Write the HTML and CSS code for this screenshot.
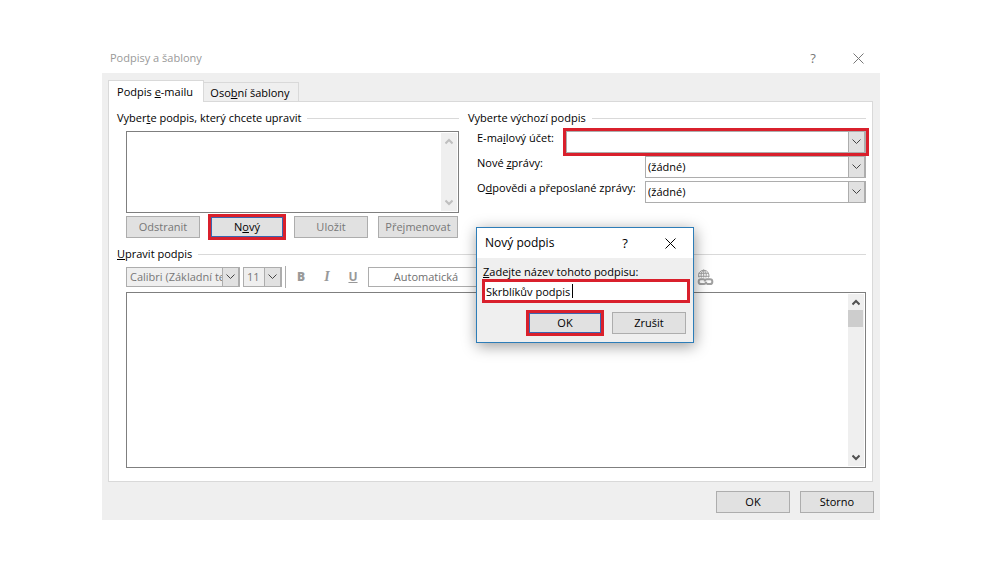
FILE: index.html
```html
<!DOCTYPE html>
<html lang="cs">
<head>
<meta charset="utf-8">
<title>Podpisy a šablony</title>
<link rel="stylesheet" href="styles.css">
</head>
<body>
<main class="window">
  <header class="titlebar">
    <h1 class="title">Podpisy a šablony</h1>
    <button class="caption-button" type="button" aria-label="Nápověda">?</button>
    <button class="caption-button caption-close" type="button" aria-label="Zavřít"><svg width="11" height="11" viewBox="0 0 11 11"><path d="M.5.5l10 10M10.500.5l-10 10"/></svg></button>
  </header>
  <div class="window-body">
    <div class="tabs" role="tablist">
      <button class="tab tab-active" type="button" role="tab" aria-selected="true">Podpis <u>e</u>-mailu</button>
      <button class="tab" type="button" role="tab" aria-selected="false">Oso<u>b</u>ní šablony</button>
    </div>
    <section class="panel" role="tabpanel">
      <div class="columns">
        <section class="group">
          <h2 class="legend">Vyber<u>t</u>e podpis, který chcete upravit</h2>
          <div class="indent">
            <div class="box list" role="listbox" aria-label="Podpisy">
              <div class="scrollbar scrollbar-disabled">
                <svg width="8" height="7" viewBox="0 0 8 7"><path d="M.5 5.500l3.500-3.500 3.500 3.500"/></svg>
                <svg width="8" height="7" viewBox="0 0 8 7"><path d="M.5 1.500l3.500 3.500 3.500-3.500"/></svg>
              </div>
            </div>
            <div class="list-actions">
              <button class="button" type="button" disabled>Odstranit</button>
              <button class="button marked default" type="button">N<u>o</u>vý</button>
              <button class="button" type="button" disabled>Uložit</button>
              <button class="button button-wide" type="button" disabled>Přejmenovat</button>
            </div>
          </div>
        </section>
        <section class="group group-defaults">
          <h2 class="legend">Vyberte výchozí podpis</h2>
          <div class="fields">
            <div class="field">
              <label for="account">E-ma<u>i</u>lový účet:</label>
              <span class="combo combo-long marked"><select id="account"><option></option></select><svg class="arrow" viewBox="0 0 9 6"><path d="M.5.5l4 4 4-4"/></svg></span>
            </div>
            <div class="field">
              <label for="new">Nové <u>z</u>právy:</label>
              <span class="combo"><select id="new"><option>(žádné)</option></select><svg class="arrow" viewBox="0 0 9 6"><path d="M.5.5l4 4 4-4"/></svg></span>
            </div>
            <div class="field">
              <label for="reply">O<u>d</u>povědi a přeposlané zprávy:</label>
              <span class="combo"><select id="reply"><option>(žádné)</option></select><svg class="arrow" viewBox="0 0 9 6"><path d="M.5.5l4 4 4-4"/></svg></span>
            </div>
          </div>
        </section>
      </div>
      <section class="group edit">
        <h2 class="legend"><u>U</u>pravit podpis</h2>
        <div class="indent">
          <div class="toolbar">
            <span class="combo combo-small combo-font"><select aria-label="Písmo" disabled><option>Calibri (Základní text)</option></select><svg class="arrow" viewBox="0 0 9 6"><path d="M.5.5l4 4 4-4"/></svg></span>
            <span class="combo combo-small combo-size"><select aria-label="Velikost" disabled><option>11</option></select><svg class="arrow" viewBox="0 0 9 6"><path d="M.5.5l4 4 4-4"/></svg></span>
            <span class="separator"></span>
            <button class="format" type="button" disabled><b>B</b></button>
            <button class="format format-italic" type="button" disabled><i>I</i></button>
            <button class="format" type="button" disabled><u>U</u></button>
            <button class="color" type="button" disabled>Automatická</button>
            <button class="link" type="button" aria-label="Hypertextový odkaz" disabled>
              <svg width="17" height="17" viewBox="0 0 17 17">
                <path d="M2 8.500A5.200 5.200 0 1 1 11.500 8.500M1.500 4.300h10.500M1 7.300h11.500M6.700 1v7.500M4.500 8.500C3.600 5.500 4.200 2.500 6.700 1c2.500 1.500 3.100 4.500 2.200 7.500"/>
                <path class="chain" d="M7.500 10.300H4a2.300 2.300 0 0 0 0 4.700h3a2.300 2.300 0 0 0 2.300-2.300M9.500 15h3.500a2.300 2.300 0 0 0 0-4.700h-3a2.300 2.300 0 0 0-2.300 2.300"/>
              </svg>
            </button>
          </div>
          <div class="box editor">
            <textarea class="editor-text" aria-label="Text podpisu"></textarea>
            <div class="scrollbar">
              <svg width="8" height="7" viewBox="0 0 8 7"><path d="M.5 5.500l3.500-3.500 3.500 3.500"/></svg>
              <span class="thumb"></span>
              <svg width="8" height="7" viewBox="0 0 8 7"><path d="M.5 1.500l3.500 3.500 3.500-3.500"/></svg>
            </div>
          </div>
        </div>
      </section>
    </section>
    <footer class="footer">
      <button class="button" type="button">OK</button>
      <button class="button" type="button">Storno</button>
    </footer>
  </div>

  <form class="dialog" role="dialog" aria-labelledby="dialog-title">
    <header class="dialog-bar">
      <h2 class="title dialog-title" id="dialog-title">Nový podpis</h2>
      <button class="caption-button" type="button" aria-label="Nápověda">?</button>
      <button class="caption-button caption-close" type="button" aria-label="Zavřít"><svg width="11" height="11" viewBox="0 0 11 11"><path d="M.5.5l10 10M10.500.5l-10 10"/></svg></button>
    </header>
    <div class="dialog-body">
      <label for="name"><u>Z</u>adejte název tohoto podpisu:</label>
      <div class="name marked"><input id="name" type="text" value="Skrblíkův podpis"><span class="caret"></span></div>
      <div class="dialog-actions">
        <button class="button marked default" type="button">OK</button>
        <button class="button" type="button">Zrušit</button>
      </div>
    </div>
  </form>
</main>
</body>
</html>
```
FILE: styles.css
```css
* { box-sizing: border-box; }

body {
  margin: 0;
  padding: 43px 120px 43px 102px;
  background: #fff;
  color: #000;
  font: 11px/16px "Open Sans", "Noto Sans", sans-serif;
}

button, input, select, textarea {
  margin: 0;
  padding: 0;
  border: 0;
  border-radius: 0;
  background: none;
  color: inherit;
  font: inherit;
}

svg { display: block; fill: none; stroke: currentColor; }
h1, h2 { margin: 0; font: inherit; }
u { text-underline-offset: 1px; }

.window { position: relative; }

.titlebar {
  display: flex;
  align-items: center;
  height: 30px;
  padding: 0 16px 0 8px;
  color: #999;
}
.title { flex: 1; }
.dialog-title { font-size: 12px; }
.caption-button {
  display: grid;
  place-items: center;
  width: 12px;
  height: 16px;
  font-size: 13px;
}
.caption-close { margin-left: 33px; }
.titlebar .caption-button { color: #777; }

.window-body { padding: 7px 6px 7px; background: #efefef; }

.tabs { display: flex; align-items: flex-end; height: 22px; }
.tab {
  width: 95px;
  height: 20px;
  padding-right: 2px;
  border: 1px solid #d9d9d9;
  border-width: 1px 1px 0 0;
  text-align: center;
}
.tab-active {
  z-index: 1;
  width: 96px;
  height: 22px;
  border-width: 1px 1px 0;
  background: #fff;
}

.panel {
  margin: -1px 1px 0 0;
  padding: 8px 6px 13px 8px;
  border: 1px solid #d9d9d9;
  background: #fff;
}
.columns { display: grid; grid-template-columns: 342fr 398fr; gap: 9px; }
.legend {
  display: flex;
  align-items: center;
  white-space: pre;
}
.legend::after {
  content: "";
  flex: 1;
  margin-left: 6px;
  border-top: 1px solid #d9d9d9;
}
.indent { padding-left: 9px; }

.box {
  display: flex;
  justify-content: flex-end;
  padding: 1px;
  border: 1px solid #7f7f7f;
  background: #fff;
}
.list { height: 82px; margin-top: 5px; }
.scrollbar {
  display: flex;
  flex-direction: column;
  align-items: center;
  justify-content: space-between;
  width: 16px;
  padding: 5px 1px 5px 0;
  background: #efefef;
  color: #505050;
}
.scrollbar svg { stroke-width: 2; }
.scrollbar-disabled { color: #bfbfbf; }
.thumb {
  width: 15px;
  height: 17px;
  margin: 4px 0 auto;
  background: #cdcdcd;
}

.button {
  width: 74px;
  height: 22px;
  border: 1px solid #adadad;
  background: #e1e1e1;
  text-align: center;
}
.button:disabled { color: #777; }
.button-wide { width: 80px; }
.marked { outline: 3px solid #d9202c; outline-offset: -1px; }
.default { border: 2px solid #3a66b0; outline-offset: -1px; }

.list-actions {
  display: flex;
  justify-content: space-between;
  margin-top: 3px;
  padding-right: 1px;
}

.fields { display: grid; gap: 3px; margin-top: 5px; padding-left: 9px; }
.field {
  display: flex;
  align-items: flex-start;
  justify-content: space-between;
}
.field label { margin-top: -1px; }
.combo {
  position: relative;
  width: 221px;
  height: 22px;
  border: 1px solid #adadad;
  background: #fff;
}
.combo select {
  width: 100%;
  height: 20px;
  padding: 0 20px 0 2px;
  appearance: none;
  opacity: 1;
}
.combo-long { width: 300px; outline-offset: 0; }
.arrow {
  position: absolute;
  top: 0;
  right: 0;
  width: 17px;
  height: 100%;
  padding: 0 3px;
  border: 1px solid #adadad;
  border-width: 0 1px 0 1px;
  background: #e1e1e1;
  color: #444;
  pointer-events: none;
}

.edit { margin-top: 8px; }
.toolbar { display: flex; align-items: center; margin: 4px 0; height: 22px; }
.combo-small { height: 20px; background: #efefef; color: #777; }
.combo-small select { height: 18px; padding: 0 17px 0 3px; }
.combo-font { width: 114px; }
.combo-size { width: 39px; margin-left: 3px; }
.separator { width: 1px; height: 22px; margin: 0 2px 0 3px; background: #adadad; }
.format {
  width: 26px;
  height: 20px;
  color: #999;
  font-size: 12px;
  font-weight: 700;
}
.format-italic { font-family: "Liberation Serif", serif; font-size: 14px; }
.color {
  width: 116px;
  height: 20px;
  margin-left: 2px;
  border: 1px solid #adadad;
  background: #fff;
  color: #707070;
  text-align: center;
}
.link { margin-left: 213px; color: #a0a0a0; }
.chain { stroke-width: 2; }
.editor { height: 176px; }
.editor-text { flex: 1; min-width: 0; resize: none; outline: 0; }

.footer { display: flex; justify-content: flex-end; gap: 10px; margin-top: 9px; }

.dialog {
  position: absolute;
  top: 184px;
  left: 374px;
  width: 218px;
  border: 1px solid #2d7db8;
  background: #efefef;
  box-shadow: 1px 3px 14px rgba(0, 0, 0, 0.4);
}
.dialog-bar {
  display: flex;
  align-items: center;
  height: 30px;
  padding: 0 17px 0 8px;
  background: #fff;
}
.dialog-body { padding: 6px 5px 8px 6px; }
.name {
  position: relative;
  height: 20px;
  margin: 1px 0 0 1px;
  background: #fff;
}
.name input { width: 100%; height: 20px; padding-left: 2px; outline: 0; }
.caret {
  position: absolute;
  top: 3px;
  left: 88px;
  width: 1px;
  height: 14px;
  background: #000;
}
.dialog-actions {
  display: flex;
  justify-content: flex-end;
  gap: 10px;
  margin-top: 11px;
  padding-right: 2px;
}
```
